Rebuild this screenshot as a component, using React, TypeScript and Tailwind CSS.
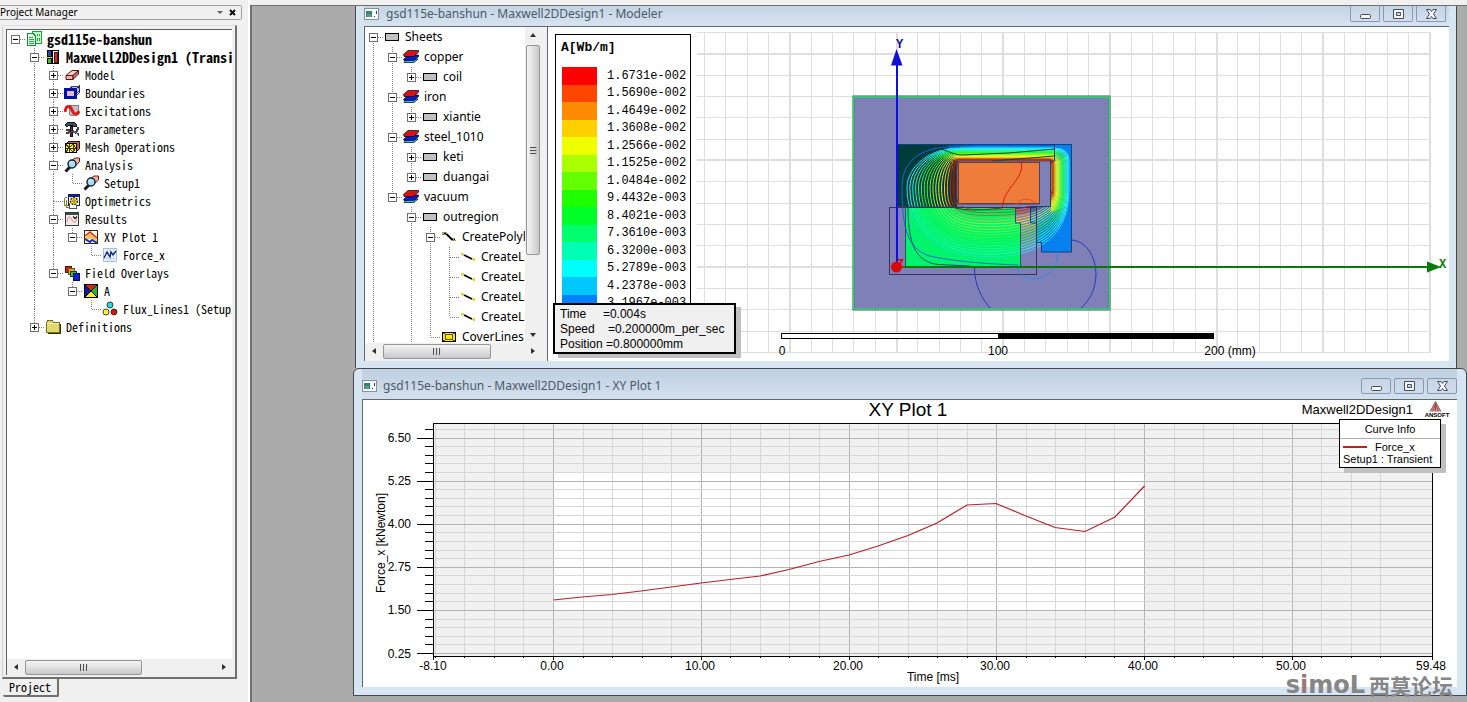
import React from "react";

type TreeNode = {
  label: string;
  icon: React.ReactNode;
  sign?: "+" | "-";
  bold?: boolean;
  more?: boolean;
  children?: TreeNode[];
};

const Pic = ({ children }: { children: React.ReactNode }) => (
  <svg viewBox="0 0 16 16" className="h-4 w-4 shrink-0" aria-hidden="true" shapeRendering="crispEdges">
    {children}
  </svg>
);

const box3d = (
  <g stroke="#5a1010" strokeWidth="1" fill="#f0b8b0" shapeRendering="auto">
    <path d="M2 8.5 8 3.5H14.5L9 8.5Z" fill="#f8d0c8" />
    <path d="M2 8.5H9V12.500H2Z" />
    <path d="M9 8.500 14.500 3.500V7L9 12.500Z" fill="#c87870" />
  </g>
);

const ProjectIcon = (
  <Pic>
    <path d="M6.500 .5H15.500V12.500H6.500Z" fill="#c8f8d0" stroke="#20a040" />
    <path d="M1.500 2.500H7L9.500 5V14.500H1.500Z" fill="#e8ffe8" stroke="#109030" />
    <path d="M3 6H7M3 8H8M3 10H8M3 12H8" stroke="#20b040" />
    <path d="M11 3V5M13 3V5M11 7V10M13 7V10" stroke="#20b040" />
  </Pic>
);
const DesignIcon = (
  <Pic>
    <path d="M2 1H6V7H2Z" fill="#2050a0" stroke="#000" />
    <path d="M2 9H6V14H2Z" fill="#40c020" stroke="#000" />
    <path d="M1 8H6" stroke="#e0e000" />
    <path d="M7.500 1V15M13.500 1V15M7 1.500H14M7 14.500H14" stroke="#000" />
    <path d="M9 3H12V13H9Z" fill="#b03828" stroke="#601008" />
  </Pic>
);
const ModelIcon = <Pic>{box3d}</Pic>;
const BoundaryIcon = (
  <Pic>
    <path d="M5 4 9 1H15V6L12 9Z" fill="#c8b0b8" stroke="#304080" />
    <path d="M1.500 4.500H11.500V12.500H1.500Z" fill="#e8b8c0" stroke="#0010a8" strokeWidth="3" />
    <path d="M11 5 15 1.500V8L11 12" fill="none" stroke="#203070" />
  </Pic>
);
const ExcitationIcon = (
  <Pic>
    <path d="M5 2H14.500V8L10 12H6Z" fill="#c8c0c0" stroke="#808080" />
    <path d="M1 9C2 2 6 2 8 7S13 13 15 8" fill="none" stroke="#e01818" strokeWidth="3" shapeRendering="auto" />
  </Pic>
);
const ParameterIcon = (
  <Pic>
    <path d="M1 4 4 1H10L12 3V5H8V4H5L3 6Z" fill="#405060" stroke="#101820" />
    <path d="M6 5H8V15H6Z" fill="#702040" stroke="#200818" />
    <path d="M2 9H5V11H12L14 8V6M11 11 15 14M2 12H5" fill="none" stroke="#404040" strokeWidth="2" />
    <path d="M9 9 14 14" stroke="#909090" />
  </Pic>
);
const MeshIcon = (
  <Pic>
    <path d="M2 5 5 2H15V10L12 13Z" fill="#b86858" stroke="#401008" />
    <path d="M1.500 4.500H12.500V13.500H1.500Z" fill="#f8f050" stroke="#000" />
    <path d="M2 9H12M5 5V13M9 5V13M2 5 5 9 9 5 12 9M2 13 5 9 9 13 12 9" stroke="#403800" fill="none" />
  </Pic>
);
const lens = (
  <g shapeRendering="auto">
    <path d="M7 4 11 1H15.500V5L12 8Z" fill="#f0b0a8" stroke="#702018" />
    <path d="M6 10 1.500 14.500" stroke="#181818" strokeWidth="3" />
    <circle cx="8" cy="7" r="4" fill="#a8dcf0" stroke="#182838" strokeWidth="1.500" />
    <path d="M6 6.500 8 4.500" stroke="#fff" />
  </g>
);
const AnalysisIcon = <Pic>{lens}</Pic>;
const OptimetricsIcon = (
  <Pic>
    <path d="M4.500 1.500H15.500V12.500H4.500Z" fill="#fff" stroke="#102060" />
    <path d="M5 2.500H15" stroke="#1020a0" strokeWidth="2" />
    <path d="M.5 4.500H3M.5 4.500V12.500H4M2.500 6.500V14.500H6" stroke="#808030" fill="none" />
    <path d="M5.500 10V15.500H12.500V12" fill="#fff" stroke="#505050" />
    <g shapeRendering="auto">
      <circle cx="10" cy="8" r="3.500" fill="#f8e020" stroke="#403800" strokeDasharray="2 1" strokeWidth="1.500" />
      <circle cx="10" cy="8" r="1.200" fill="#fff" stroke="#403800" strokeWidth=".7" />
    </g>
  </Pic>
);
const ResultsIcon = (
  <Pic>
    <path d="M1.500 1.500H14.500V14.500H1.500Z" fill="#f8e8e8" stroke="#303838" />
    <path d="M2 3H14" stroke="#305048" strokeWidth="2" />
    <path d="M3 11C4 4 6 5 8 9S12 12 13 6" fill="none" stroke="#d88080" shapeRendering="auto" />
    <path d="M9 5 11 8 13 5" fill="none" stroke="#204020" />
  </Pic>
);
const PlotIcon = (
  <Pic>
    <path d="M1.500 1.500H14.500V14.500H1.500Z" fill="#fff8e8" stroke="#402010" />
    <g shapeRendering="auto" fill="none">
      <path d="M2 9 7 4 14 10V13L8 9 2 12Z" fill="#f8c050" />
      <path d="M2 7 7 3 14 9" stroke="#d03010" strokeWidth="1.500" />
      <path d="M2 10 7 13 9 11 14 14" stroke="#1030c0" strokeWidth="1.800" />
    </g>
  </Pic>
);
const TraceIcon = (
  <Pic>
    <path d="M1.500 1.500H14.500V14.500H1.500Z" fill="#e8f4fc" stroke="#a8c0e8" />
    <path d="M5 2V14M8 2V14M11 2V14M2 5H14M2 11H14" stroke="#c8dcf0" />
    <path d="M2 11 5 5 8 10 9 5 11 8 14 4" fill="none" stroke="#102080" strokeWidth="1.300" shapeRendering="auto" />
  </Pic>
);
const OverlayIcon = (
  <Pic>
    <path d="M1 1H7V7H1Z" fill="#c02010" stroke="#601008" />
    <path d="M4 3H10V9H4Z" fill="#f0a020" stroke="#805008" />
    <path d="M6 6H12V11H6Z" fill="#30c040" stroke="#085018" />
    <path d="M9 8H15.500V15H9Z" fill="#1020d0" stroke="#000860" />
  </Pic>
);
const FieldIcon = (
  <Pic>
    <path d="M2 2H14L8 8Z" fill="#e02010" />
    <path d="M2 2V14L8 8Z" fill="#1018a8" />
    <path d="M14 2V14L8 8Z" fill="#20b820" />
    <path d="M2 14H14L8 8Z" fill="#f8f020" />
    <path d="M2 2 14 14M14 2 2 14M1.500 1.500H14.500V14.500H1.500Z" fill="none" stroke="#000" />
  </Pic>
);
const FluxIcon = (
  <Pic>
    <g shapeRendering="auto" stroke="#202020" strokeWidth=".8">
      <circle cx="8" cy="4" r="3" fill="#20d8e0" />
      <circle cx="4" cy="11" r="3" fill="#f8f040" />
      <circle cx="12" cy="11" r="3" fill="#c81818" />
    </g>
  </Pic>
);
const FolderIcon = (
  <Pic>
    <path d="M1.500 3.500 3 1.500H7L8.500 3.500H14.500V13.500H1.500Z" fill="#e0d870" stroke="#787020" />
    <path d="M2 4.500H14" stroke="#f8f4b8" />
    <path d="M15 5V14H3" fill="none" stroke="#303010" />
  </Pic>
);
const SheetIcon = (
  <Pic>
    <path d="M1.500 4.500H14.500V11.500H1.500Z" fill="#c0c0c0" stroke="#000" />
  </Pic>
);
const MaterialIcon = (
  <Pic>
    <g shapeRendering="auto" stroke="#000" strokeWidth=".7">
      <path d="M1 13.500 4 10H15L11 13.500Z" fill="#20c8f8" />
      <path d="M.5 10.500 5 6H15.500V7.500L11 11.500H1Z" fill="#0818d0" />
      <path d="M.5 5.500 5 1.500H15.500V3L11 7.500H1Z" fill="#d81010" />
    </g>
  </Pic>
);
const PolyIcon = (
  <Pic>
    <path d="M1 4.500H5L11 10.500H14" fill="none" stroke="#000" strokeWidth="1.800" shapeRendering="auto" />
    <path d="M1 3H3V5H1ZM5 4H6V5H5ZM12 9H13V11H12ZM13 11H15V12H13Z" fill="#b8b020" />
  </Pic>
);
const LineIcon = (
  <Pic>
    <path d="M4 6 12 10" fill="none" stroke="#000" strokeWidth="1.800" shapeRendering="auto" />
    <path d="M1 4H4V6H3V7H2V6H1ZM12 9H15V12H13V11H12Z" fill="#e0d830" />
  </Pic>
);
const CoverIcon = (
  <Pic>
    <path d="M1.500 3.500H14.500V12.500H1.500Z" fill="#f8e800" stroke="#000" />
    <path d="M4.500 5.500H11.500V10.500H4.500ZM2 4 4.500 5.500M14 4 11.500 5.500M2 12 4.500 10.500M14 12 11.500 10.500" fill="none" stroke="#605000" />
  </Pic>
);

const projectTree: TreeNode[] = [
  {
    label: "gsd115e-banshun", icon: ProjectIcon, sign: "-", bold: true,
    children: [
      {
        label: "Maxwell2DDesign1 (Transient)", icon: DesignIcon, sign: "-", bold: true,
        children: [
          { label: "Model", icon: ModelIcon, sign: "+" },
          { label: "Boundaries", icon: BoundaryIcon, sign: "+" },
          { label: "Excitations", icon: ExcitationIcon, sign: "+" },
          { label: "Parameters", icon: ParameterIcon, sign: "+" },
          { label: "Mesh Operations", icon: MeshIcon, sign: "+" },
          { label: "Analysis", icon: AnalysisIcon, sign: "-", children: [{ label: "Setup1", icon: AnalysisIcon }] },
          { label: "Optimetrics", icon: OptimetricsIcon },
          {
            label: "Results", icon: ResultsIcon, sign: "-",
            children: [{ label: "XY Plot 1", icon: PlotIcon, sign: "-", children: [{ label: "Force_x", icon: TraceIcon }] }],
          },
          {
            label: "Field Overlays", icon: OverlayIcon, sign: "-",
            children: [{ label: "A", icon: FieldIcon, sign: "-", children: [{ label: "Flux_Lines1 (Setup1)", icon: FluxIcon }] }],
          },
        ],
      },
      { label: "Definitions", icon: FolderIcon, sign: "+" },
    ],
  },
];

const modelTree: TreeNode[] = [
  {
    label: "Sheets", icon: SheetIcon, sign: "-", more: true,
    children: [
      { label: "copper", icon: MaterialIcon, sign: "-", children: [{ label: "coil", icon: SheetIcon, sign: "+" }] },
      { label: "iron", icon: MaterialIcon, sign: "-", children: [{ label: "xiantie", icon: SheetIcon, sign: "+" }] },
      {
        label: "steel_1010", icon: MaterialIcon, sign: "-",
        children: [
          { label: "keti", icon: SheetIcon, sign: "+" },
          { label: "duangai", icon: SheetIcon, sign: "+" },
        ],
      },
      {
        label: "vacuum", icon: MaterialIcon, sign: "-",
        children: [
          {
            label: "outregion", icon: SheetIcon, sign: "-", more: true,
            children: [
              {
                label: "CreatePolyline", icon: PolyIcon, sign: "-",
                children: [
                  { label: "CreateLine", icon: LineIcon },
                  { label: "CreateLine", icon: LineIcon },
                  { label: "CreateLine", icon: LineIcon },
                  { label: "CreateLine", icon: LineIcon },
                ],
              },
              { label: "CoverLines", icon: CoverIcon },
            ],
          },
        ],
      },
    ],
  },
];

type Row = { node: TreeNode; guides: boolean[]; last: boolean; root: boolean };

function flatten(nodes: TreeNode[], guides: boolean[] = []): Row[] {
  return nodes.flatMap((node, i) => {
    const last = i === nodes.length - 1 && !node.more;
    const row: Row = { node, guides, last, root: guides.length === 0 && i === 0 };
    return [row, ...flatten(node.children ?? [], [...guides, !last])];
  });
}

function Guide({ height, up, down, stub, sign }: { height: number; up: boolean; down: boolean; stub: boolean; sign?: string }) {
  const mid = height / 2;
  const dots = { stroke: "#808080", strokeDasharray: "1 1" };
  return (
    <svg width="19" height={height} viewBox={`0 0 19 ${height}`} className="shrink-0" aria-hidden="true" shapeRendering="crispEdges">
      {up && <path d={`M8.500 0V${mid}`} {...dots} />}
      {down && <path d={`M8.500 ${mid}V${height}`} {...dots} />}
      {stub && <path d={`M9 ${mid + 0.5}H19`} {...dots} />}
      {sign && (
        <g>
          <rect x="4.500" y={mid - 3.5} width="8" height="8" fill="#fff" stroke="#707070" />
          <path d={`M6 ${mid + 0.5}H11`} stroke="#000" />
          {sign === "+" && <path d={`M8.500 ${mid - 2}V${mid + 3}`} stroke="#000" />}
        </g>
      )}
    </svg>
  );
}

function Tree({ nodes, rowHeight, rowClass, boldClass = "", name }: { nodes: TreeNode[]; rowHeight: number; rowClass: string; boldClass?: string; name: string }) {
  return (
    <ul aria-label={name}>
      {flatten(nodes).map(({ node, guides, last, root }, i) => (
        <li key={i} className={`flex items-center whitespace-pre ${rowClass}`}>
          {guides.map((g, k) => (
            <Guide key={k} height={rowHeight} up={g} down={g} stub={false} />
          ))}
          <Guide height={rowHeight} up={!root} down={!last} stub sign={node.sign} />
          {node.icon}
          <span className={`ml-[5px] ${node.bold ? boldClass : ""}`}>{node.label}</span>
        </li>
      ))}
    </ul>
  );
}

function Arrow({ dir }: { dir: "left" | "right" | "up" | "down" }) {
  const d = { left: "M7 1V7L3 4Z", right: "M2 1V7L6 4Z", up: "M1 6H7L4 2Z", down: "M1 2H7L4 6Z" }[dir];
  return (
    <button type="button" aria-label={`Scroll ${dir}`} className="flex h-4 w-4 shrink-0 items-center justify-center">
      <svg viewBox="0 0 8 8" className="h-2 w-2" aria-hidden="true">
        <path d={d} fill="#303030" />
      </svg>
    </button>
  );
}

const GripH = () => (
  <svg viewBox="0 0 8 7" className="h-[7px] w-2" aria-hidden="true" shapeRendering="crispEdges">
    <path d="M.5 0V7M3.500 0V7M6.500 0V7" stroke="#505050" />
    <path d="M1.500 0V7M4.500 0V7M7.500 0V7" stroke="#d8d8d8" />
  </svg>
);

function HScroll({ thumb }: { thumb: string }) {
  return (
    <div className="flex h-4 items-center bg-[#f0f0f0]">
      <Arrow dir="left" />
      <div className="flex h-full flex-1 items-center px-[2px]">
        <div className={`flex h-[15px] items-center justify-center rounded-xs border border-[#959595] bg-linear-to-b from-[#f4f4f4] via-[#e0e0e0] to-[#c8c8cc] ${thumb}`}>
          <GripH />
        </div>
      </div>
      <Arrow dir="right" />
    </div>
  );
}

function WindowButtons({ buttonClass }: { buttonClass: string }) {
  const shapes = [
    { name: "Minimize", el: <rect x="3.500" y="6.500" width="10" height="4" rx="1" /> },
    { name: "Restore", el: <path fillRule="evenodd" d="M3.500 1.500H13.500V10.500H3.500ZM6.500 4.500V7.500H10.500V4.500Z" /> },
    { name: "Close", el: <path d="M3.500 1.500H7L8.500 3.500 10 1.500H13.500L10.500 6 13.500 10.500H10L8.500 8.500 7 10.500H3.500L6.500 6Z" /> },
  ];
  return (
    <div className="flex gap-[3px]">
      {shapes.map((s) => (
        <button key={s.name} type="button" aria-label={s.name} className={`flex w-[30px] items-center justify-center border border-[#8798b8] ${buttonClass}`}>
          <svg viewBox="0 0 17 12" className="h-3 w-[17px]" fill="#f4f6fa" stroke="#454c5c" aria-hidden="true">
            {s.el}
          </svg>
        </button>
      ))}
    </div>
  );
}

const WindowIcon = () => (
  <svg viewBox="0 0 15 12" className="h-3 w-[15px] shrink-0" aria-hidden="true" shapeRendering="crispEdges">
    <path d="M.5 .5H14.500V11.500H.5Z" fill="#f8fcff" stroke="#8890a0" />
    <path d="M2 3H8V9H2Z" fill="#388070" />
    <path d="M3 6H7V9H3Z" fill="#50a080" />
    <path d="M10 8H11V9H10ZM12 3H13V6H12Z" fill="#304050" />
  </svg>
);

const legend: [string, string][] = [
  ["1.6731e-002", "bg-[#ff0000]"],
  ["1.5690e-002", "bg-[#ff4600]"],
  ["1.4649e-002", "bg-[#ff8c00]"],
  ["1.3608e-002", "bg-[#ffd000]"],
  ["1.2566e-002", "bg-[#f0ff00]"],
  ["1.1525e-002", "bg-[#aaff00]"],
  ["1.0484e-002", "bg-[#64ff00]"],
  ["9.4432e-003", "bg-[#1eff00]"],
  ["8.4021e-003", "bg-[#00ff28]"],
  ["7.3610e-003", "bg-[#00ff6e]"],
  ["6.3200e-003", "bg-[#00ffb4]"],
  ["5.2789e-003", "bg-[#00fffa]"],
  ["4.2378e-003", "bg-[#00c8ff]"],
  ["3.1967e-003", "bg-[#0082ff]"],
];

const range = (n: number) => Array.from({ length: n }, (_, i) => i);

const FLUX_COUNT = 18;
const STEP = 21.34;

function fluxLine(i: number) {
  const t = i / (FLUX_COUNT - 1);
  const top = 160 - 12 * t;
  const left = 956 - 49 * t;
  const bottom = 210 + 47 * t;
  const right = 1052 + 17 * t;
  return [
    `M958 ${top}`,
    `C${957 - 26 * t} ${top} ${left} ${172 - 6 * t} ${left} 188`,
    `C${left} ${206 + 20 * t} ${958 - 24 * t} ${bottom} ${990} ${bottom}`,
    `C${1010 + 18 * t} ${bottom} ${right} ${208 + 36 * t} ${right} 190`,
    `V${168 - 8 * t}`,
    `Q${right} ${top} ${1050 + 4 * t} ${top}`,
    "Z",
  ].join(" ");
}

function FieldView() {
  return (
    <svg viewBox="548 27 901 334" className="block h-auto w-full" role="img" aria-label="Flux line plot">
      <defs>
        <linearGradient id="band" x1="0" y1="0" x2="0" y2="1">
          <stop offset="0" stopColor="#0058e0" />
          <stop offset=".25" stopColor="#00d8f0" />
          <stop offset=".5" stopColor="#00f850" />
          <stop offset=".8" stopColor="#f0f000" />
          <stop offset="1" stopColor="#ff6000" />
        </linearGradient>
        <linearGradient id="side" x1="0" y1="0" x2="1" y2="0">
          <stop offset="0" stopColor="#f0d000" />
          <stop offset=".35" stopColor="#50e860" />
          <stop offset=".7" stopColor="#00b8f0" />
          <stop offset="1" stopColor="#0078f0" />
        </linearGradient>
        <linearGradient id="edge" x1="0" y1="0" x2="1" y2="0">
          <stop offset="0" stopColor="#003c3c" />
          <stop offset="1" stopColor="#003c3c" stopOpacity="0" />
        </linearGradient>
      </defs>
      <g stroke="#dedede" shapeRendering="crispEdges">
        {range(35).map((i) => {
          const x = 1430 - i * STEP;
          return <path key={i} d={`M${x} 32V353`} strokeWidth={i % 5 === 0 ? 2 : 1} />;
        })}
        {range(16).map((i) => {
          const y = 32.4 + i * STEP;
          return <path key={i} d={`M697 ${y}H1430`} strokeWidth={i % 5 === 1 ? 2 : 1} />;
        })}
      </g>
      <rect x="853.500" y="96.500" width="256" height="213" fill="#8080b8" stroke="#604068" strokeWidth="2" />
      <rect x="853.500" y="97" width="256" height="212" fill="none" stroke="#38cc78" strokeWidth="1.800" />
      <path d="M898 144H1055V161H957V207H898Z" fill="#003c3c" />
      <path d="M948 145H1055V161H957Z" fill="url(#band)" />
      <path d="M930 145H975V160H955Z" fill="url(#edge)" />
      <path d="M905 207H1015V223H1020.500V266H905Z" fill="#00f46c" />
      <path d="M1054 144H1072V252H1041.500V242H1036.500V223H1030.500V207H1051V161H1054Z" fill="#0880f0" />
      <path d="M1051 161H1069V205L1051 212Z" fill="url(#side)" />
      <g fill="none" strokeWidth="1">
        {range(FLUX_COUNT).map((i) => (
          <path key={i} d={fluxLine(i)} stroke={`hsl(${Math.round((i / (FLUX_COUNT - 1)) * 190)} 95% ${i < 3 ? 38 : 58}%)`} />
        ))}
      </g>
      <path d="M905 207H1015V223H1020.500V266H905Z" fill="#00f46c" fillOpacity=".4" />
      <path d="M960 147C925 145 902 158 902 187C902 230 908 252 934 257S990 264 1018 265" fill="none" stroke="#1068d8" />
      <path d="M936 147C950 152 955 155 962 155Q1010 154 1054 149M992 161Q1030 158 1054 156" fill="none" stroke="#084830" />
      <path d="M951 162V206M954 160V207" stroke="#801810" fill="none" />
      <rect x="958.500" y="162.500" width="81" height="41" fill="#f07c3c" stroke="#604838" />
      <path d="M957 204H1040V162H1051V206H957Z" fill="#8080b8" />
      <path d="M898 207H957V161H1050M1039.500 162V204H958" fill="none" stroke="#504058" />
      <path d="M898 144.500H1071.500V252H1041.500V242.500H1036.500V223H1030.500V206.500H1050.500V161H1054.500V145" fill="none" stroke="#104080" />
      <path d="M905.500 266V207.500H1015.500V223H1020.500V266" fill="none" stroke="#205860" />
      <path d="M955 208Q970 212 1002 208" fill="none" stroke="#504020" />
      <rect x="889.500" y="207.500" width="147" height="67" fill="none" stroke="#383060" />
      <path d="M1021 162C1025 180 1004 186 1002.500 207" fill="none" stroke="#d81808" />
      <path d="M1015 205Q1024 194 1036 203" fill="none" stroke="#e85028" />
      <path d="M1058 252C1057 272 1043 279 1034 279Q1021 278 1016 267" fill="none" stroke="#3088e8" />
      <path d="M974.500 267C974 284 982 299 990 308M1072 240C1088 242 1096 258 1096 276 1095 292 1088 302 1081 308" fill="none" stroke="#2038b8" />
      <path d="M908 208C908 248 918 262 938 264.500L970 266" fill="none" stroke="#104878" />
      <path d="M897 267H1428" stroke="#087808" strokeWidth="2" />
      <path d="M1427 261.500V272.500L1441 267Z" fill="#087808" />
      <path d="M897 267V64" stroke="#1010d8" strokeWidth="2" />
      <path d="M891 65.500H902.500L896.500 49Z" fill="#1010d8" />
      <circle cx="896.500" cy="267" r="5.500" fill="#d80808" />
      <g className="font-['Liberation_Mono',monospace] text-[12px] font-bold">
        <text x="896" y="48" fill="#101080">Y</text>
        <text x="1439" y="268" fill="#087808">X</text>
        <text x="897" y="268" fill="#d80808">Z</text>
      </g>
      <rect x="781.500" y="333.500" width="217" height="5" fill="#fff" stroke="#000" />
      <rect x="998" y="333" width="216" height="6" fill="#000" />
      <g className="font-['Liberation_Sans',sans-serif] text-[12px]" textAnchor="middle">
        <text x="782" y="355">0</text>
        <text x="998" y="355">100</text>
        <text x="1230" y="355">200 (mm)</text>
      </g>
    </svg>
  );
}

const curve = "553.5,600 582,597 612,594.5 641,591 671,587 701,583 730,579.5 760,576 789,569.5 819,561.5 849,555 878,546 908,535.5 937,523 967,505 996,503.5 1026,516 1055,527.5 1085,531.5 1115,517 1144.5,486";
const X0 = 553.5;
const XU = 14.775;
const Y0 = 653.5;
const YU = 8.62;

function XYPlot() {
  return (
    <svg viewBox="363 400 1094 287" className="block h-auto w-full font-['Liberation_Sans',sans-serif] text-[12px]" role="img" aria-label="Force_x over time">
      <rect x="433" y="423" width="1000" height="233" fill="#f1f1f1" />
      <rect x="553" y="473" width="592" height="138" fill="#fff" />
      <g shapeRendering="crispEdges">
        {range(33).map((k) => {
          const x = X0 + (k - 4) * 2 * XU;
          const major = (k - 4) % 5 === 0;
          return (
            <g key={k}>
              <path d={`M${x} 423V656`} stroke={major ? "#b4b4b4" : "#d6d6d6"} />
              <path d={`M${x} 656V${major ? 660 : 658}`} stroke="#000" />
            </g>
          );
        })}
        {range(27).map((k) => {
          const y = Y0 - k * YU;
          const major = k % 5 === 0;
          return (
            <g key={k}>
              <path d={`M434 ${y}H1432`} stroke={major ? "#b4b4b4" : "#d6d6d6"} />
              <path d={`M${major ? 417 : 425} ${y}H433`} stroke="#000" />
            </g>
          );
        })}
        <rect x="433.500" y="423.500" width="999" height="233" fill="none" stroke="#000" />
        <path d="M433.500 656V660M1432.500 656V660" stroke="#000" />
      </g>
      <polyline points={curve} fill="none" stroke="#b82028" strokeWidth="1.200" />
      <g textAnchor="end">
        {["0.25", "1.50", "2.75", "4.00", "5.25", "6.50"].map((v, i) => (
          <text key={v} x="411" y={Math.round(Y0 + 4 - i * 5 * YU)}>{v}</text>
        ))}
      </g>
      <g textAnchor="middle">
        <text x="433" y="670">-8.10</text>
        {["0.00", "10.00", "20.00", "30.00", "40.00", "50.00"].map((v, i) => (
          <text key={v} x={Math.round(552 + i * 10 * XU)} y="670">{v}</text>
        ))}
        <text x="1431" y="670">59.48</text>
        <text x="933" y="681">Time [ms]</text>
        <text transform="translate(385 543) rotate(-90)">Force_x [kNewton]</text>
        <text x="908" y="416" className="text-[19px]">XY Plot 1</text>
      </g>
      <text x="1413" y="414" textAnchor="end" className="text-[13px]">Maxwell2DDesign1</text>
      <g>
        <path d="M1435.500 401.500 1441 411.500H1430Z" fill="#c89090" />
        <path d="M1435.500 401.500 1430 411.500M1435.500 404 1432.500 411.500M1435.500 403V411.500M1435.500 404 1438.500 411.500M1435.500 401.500 1441 411.500" stroke="#983838" strokeWidth=".8" />
        <text x="1437" y="417" textAnchor="middle" className="text-[6px] font-bold">ANSOFT</text>
      </g>
    </svg>
  );
}

export default function App() {
  return (
    <div className="flex min-h-screen bg-[#f0f0f0] text-black">
      <aside className="flex w-[250px] shrink-0 flex-col border-r-2 border-white pt-[5px]">
        <header className="mr-[6px] flex h-[15px] items-center rounded-r-xs border border-l-0 border-[#a0a0a0] font-['Noto_Sans',sans-serif] text-[10px] leading-[13px]">
          <h2 className="flex-1 whitespace-nowrap">Project Manager</h2>
          <button type="button" aria-label="Panel menu" className="w-3">
            <svg viewBox="0 0 6 3" className="h-[3px] w-[6px]" aria-hidden="true"><path d="M0 0H6L3 3Z" fill="#606060" /></svg>
          </button>
          <button type="button" aria-label="Close panel" className="mr-[2px] w-[10px]">
            <svg viewBox="0 0 7 7" className="h-[7px] w-[7px]" aria-hidden="true"><path d="M1 1 6 6M6 1 1 6" stroke="#000" strokeWidth="1.800" /></svg>
          </button>
        </header>
        <div className="mt-[5px] mr-[11px] ml-[2px] flex flex-1 flex-col border-t border-r-2 border-b-2 border-l border-t-[#e0e0e0] border-r-[#707070] border-b-[#707070] border-l-[#d0d0d0] pt-[3px] pr-[3px] pb-[2px] pl-[3px]">
          <div className="flex flex-1 flex-col border-t border-l border-[#606060] bg-white">
            <div className="flex-1 overflow-hidden">
              <div className="w-0 min-w-full">
                <Tree
                  nodes={projectTree}
                  rowHeight={18}
                  rowClass="h-[18px] text-[12px] leading-[18px] font-['Noto_Sans_Mono_CJK_SC','Liberation_Mono',monospace]"
                  boldClass="text-[14px] font-bold"
                  name="Project"
                />
              </div>
            </div>
            <HScroll thumb="w-[117px]" />
          </div>
        </div>
        <button type="button" className="mb-[5px] ml-[3px] h-[18px] w-14 rounded-b-xs border-r-2 border-b-2 border-[#707070] font-['Noto_Sans_Mono_CJK_SC','Liberation_Mono',monospace] text-[12px] leading-4">
          Project
        </button>
      </aside>

      <main className="mt-[5px] min-w-0 flex-1 overflow-hidden border-t border-l-2 border-[#707070] bg-[#ababab]">
        <section className="mr-[10px] ml-[103px] border-x border-[#404850] bg-[#d7e4f2] pr-[7px] pb-[7px] pl-2">
          <header className="flex h-5 items-start justify-between bg-linear-to-b from-[#c4d3e2] to-[#d7e4f2]">
            <div className="flex h-4 items-center gap-[7px]">
              <WindowIcon />
              <h2 className="font-['Noto_Sans',sans-serif] text-[12px] leading-4 whitespace-nowrap text-[#4c5a68]">gsd115e-banshun - Maxwell2DDesign1 - Modeler</h2>
            </div>
            <div className="mr-[3px]"><WindowButtons buttonClass="h-4 rounded-b-xs border-t-0" /></div>
          </header>
          <div className="flex border-t border-l border-[#606870] bg-[#f0f0f0]">
            <div className="w-[176px] shrink-0">
              <div className="flex h-[316px]">
                <div className="w-40 overflow-hidden bg-white">
                  <Tree nodes={modelTree} rowHeight={20} rowClass="h-5 text-[12px] leading-5 font-['Noto_Sans',sans-serif]" name="Model" />
                </div>
                <div className="flex w-4 flex-col items-center">
                  <Arrow dir="up" />
                  <div className="flex-1 pt-[2px]">
                    <div className="flex h-[210px] w-[14px] items-center justify-center rounded-xs border border-[#959595] bg-linear-to-r from-[#f4f4f4] via-[#e0e0e0] to-[#c8c8cc]">
                      <span className="rotate-90"><GripH /></span>
                    </div>
                  </div>
                  <Arrow dir="down" />
                </div>
              </div>
              <HScroll thumb="w-[108px]" />
            </div>
            <div className="w-[7px] shrink-0 border-r border-[#606870]" />
            <div className="relative min-w-0 flex-1 bg-white">
              <FieldView />
              <div className="absolute top-[7px] left-[7px] h-[285px] w-[136px] overflow-hidden border border-black bg-white font-['Liberation_Mono',monospace]">
                <h3 className="mt-[5px] pl-[5px] text-[13px] leading-4 font-bold">A[Wb/m]</h3>
                <ul className="mt-[11px] flex h-[245px] flex-col pl-[6px] text-[12px] leading-4">
                  {legend.map(([value, swatch]) => (
                    <li key={value} className="flex flex-1 items-center gap-[10px]">
                      <span className={`h-full w-[35px] ${swatch}`} />
                      {value}
                    </li>
                  ))}
                </ul>
              </div>
              <div className="absolute top-[276px] left-[5px] w-[183px] border-2 border-black bg-[#f0f0f0] pt-[2px] pl-[5px] font-['Liberation_Sans',sans-serif] text-[12px] leading-[15px] whitespace-pre shadow-[5px_4px_0_#c0c0c0]">
                <p>{"Time     =0.004s"}</p>
                <p>{"Speed    =0.200000m_per_sec"}</p>
                <p>{"Position =0.800000mm"}</p>
              </div>
            </div>
          </div>
        </section>

        <section className="ml-[101px] rounded-t-md border border-[#404850] bg-[#d7e4f2] pr-[9px] pb-2 pl-2">
          <header className="flex h-[30px] items-center justify-between bg-linear-to-b from-[#c0cfdf] to-[#d3e0ee] pt-1">
            <div className="flex items-center gap-[6px]">
              <WindowIcon />
              <h2 className="font-['Noto_Sans',sans-serif] text-[12px] leading-4 whitespace-nowrap text-[#4c5a68]">gsd115e-banshun - Maxwell2DDesign1 - XY Plot 1</h2>
            </div>
            <WindowButtons buttonClass="h-4 rounded-xs" />
          </header>
          <div className="relative border-t border-l border-[#606870] bg-white">
            <XYPlot />
            <div className="absolute top-[19px] right-4 w-[102px] border border-black bg-white font-['Liberation_Sans',sans-serif] text-[11px] leading-3 shadow-[5px_5px_0_#c0c0c0]">
              <h3 className="border-b border-[#b0b0b0] text-center leading-[18px]">Curve Info</h3>
              <div className="flex h-[14px] items-end gap-2 pl-[3px]">
                <span className="mb-[5px] h-[2px] w-6 bg-[#c02020]" />
                <span>Force_x</span>
              </div>
              <p className="pb-[2px] pl-[3px] whitespace-nowrap">Setup1 : Transient</p>
            </div>
            <div className="absolute right-1 -bottom-[8px] flex items-center text-[#868686]">
              <span className="font-['DejaVu_Sans',sans-serif] text-[24px] leading-5 font-bold">s<span className="text-[#a07878]">i</span>moL</span>
              <span className="ml-1 font-['Noto_Sans_CJK_SC',sans-serif] text-[21px] leading-5 font-bold">西莫论坛</span>
            </div>
          </div>
        </section>
      </main>
    </div>
  );
}
